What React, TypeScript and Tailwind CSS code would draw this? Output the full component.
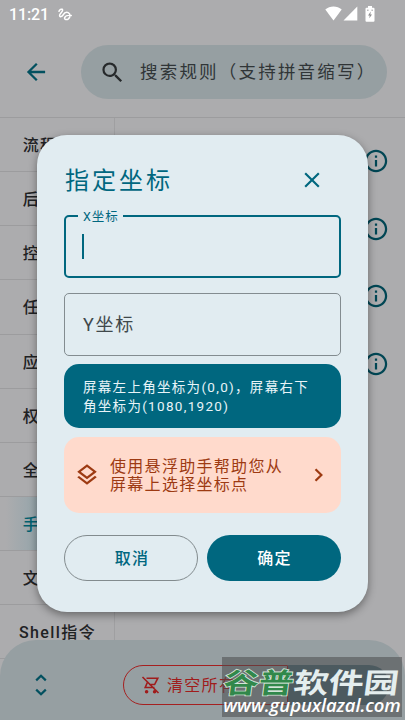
import { MdArrowBack, MdClose, MdInfoOutline, MdOutlineLayers, MdSearch } from "react-icons/md";

const categories = [
  "流程控制",
  "后台任务",
  "控件操作",
  "任务管理",
  "应用操作",
  "权限检查",
  "全局操作",
  "手势操作",
  "文件操作",
  "Shell指令",
];

function StatusBar() {
  return (
    <div className="flex h-[29px] items-center pl-[9px] pr-[30px] text-white">
      <span className="text-[16px] font-medium leading-none tracking-[-0.1px]">11:21</span>
      <svg className="ml-[9px]" width="14" height="14" viewBox="0 0 14 14" fill="none" stroke="currentColor" strokeWidth="1.5" strokeLinecap="round" strokeLinejoin="round">
        <path d="M1 3.2C1.600 1.400 4.600.2 4.600 2.200 4.600 4 1.400 5.600 1.600 7.600 2 9.800 4 8.400 5 7 6.200 5 8.200 3.800 10.200 4.600 12.600 5.800 12.600 9 10.400 10.800 8.600 12.200 6.200 11.600 6.600 9.800 7.200 7.800 10.400 7 13.200 7.600" />
      </svg>
      <div className="ml-auto flex items-center pb-0.5">
        <svg width="17" height="15" viewBox="0 0 17 15" fill="currentColor">
          <path d="M8.5 14.5L.3 3.6C2.6 1.6 5.400.6 8.500.6s5.900 1 8.200 3z" />
        </svg>
        <svg className="ml-[1px]" width="15" height="15" viewBox="0 0 15 15" fill="currentColor">
          <path d="M14.300.5v14H.5z" />
        </svg>
        <svg className="ml-[7px]" width="10" height="16" viewBox="0 0 10 16">
          <path d="M3 0h4v1.700h1.500Q9.500 1.700 9.500 2.700v12Q9.500 15.700 8.500 15.700h-7Q.5 15.700.5 14.700v-12Q.5 1.700 1.500 1.700H3z" fill="currentColor" />
          <path d="M5.800 5.600L3 9.400h1.700L4.300 12.200 7 8.400H5.300z" fill="#8c8c8e" />
          <path d="M2 4.200h1.600M6.400 4.200H8" stroke="#a0a0a2" strokeWidth="1" />
        </svg>
      </div>
    </div>
  );
}

function Header() {
  return (
    <header className="flex h-[118px] shrink-0 flex-col border-b border-[#9c9c9e]">
      <StatusBar />
      <div className="mt-4 flex items-center">
        <MdArrowBack className="ml-6 size-6 scale-[1.14] text-[#02505f]" />
        <div className="ml-[33px] flex h-[54px] w-[306px] items-center rounded-full bg-[#969fa2] pl-[18px] text-[#26292b]">
          <MdSearch className="size-[27px]" />
          <span className="ml-[14px] whitespace-nowrap text-[17.5px] tracking-[2.2px] text-[#303537]">搜索规则（支持拼音缩写）</span>
        </div>
      </div>
    </header>
  );
}

function Sidebar() {
  return (
    <nav className="w-[115px] shrink-0 border-r border-[#9f9fa1]">
      {categories.map((name) => (
        <div
          key={name}
          className={
            name === "手势操作"
              ? "flex h-[54.15px] items-center justify-center border-b border-[#9c9c9e] bg-linear-to-r from-[#acacae] from-5% to-[#8fa3aa] to-40% pl-px pt-[3px] text-[16px] font-medium tracking-[1.4px] text-[#02606f]"
              : "flex h-[54.15px] items-center justify-center border-b border-[#9c9c9e] pl-px pt-[3px] text-[16px] font-medium tracking-[1.4px] text-[#1f2224]"
          }
        >
          {name}
        </div>
      ))}
    </nav>
  );
}

function Content() {
  return (
    <div className="flex flex-1 flex-col items-end gap-[43.7px] pr-[17px] pt-[31px]">
      {[0, 1, 2, 3].map((i) => (
        <MdInfoOutline key={i} className="size-6 scale-[1.12] text-[#014654]" />
      ))}
    </div>
  );
}

function BottomBar() {
  return (
    <footer className="absolute inset-x-0 bottom-0 flex h-20 items-center rounded-t-[36px] bg-[#969fa2] pl-[35px] pt-[10px]">
      <svg width="12" height="22" viewBox="0 0 12 22" fill="none" stroke="#02505f" strokeWidth="2.200">
        <path d="M1.200 6.400L6 1.800l4.800 4.600M1.200 15.600L6 20.200l4.800-4.600" />
      </svg>
      <div className="ml-[76px] flex h-10 w-[165px] items-center rounded-l-full border border-[#a52020] pl-[17px] text-[#a01c1c]">
        <svg width="20" height="20" viewBox="0 0 20 20" fill="none" stroke="currentColor" strokeWidth="1.600">
          <path d="M1.500 2l16 16M5.500 3.200h11.300l-3.200 6.300H8M6.800 6.500l-2.600 6h9.300" />
          <circle cx="5.600" cy="16.800" r="1" fill="currentColor" />
          <circle cx="13.600" cy="16.800" r="1" fill="currentColor" />
        </svg>
        <span className="ml-[6px] whitespace-nowrap pt-0.5 text-[16px] tracking-[1.3px]">清空所有</span>
      </div>
      <div className="h-10 w-[101px] rounded-r-full bg-[#4f6d75]" />
    </footer>
  );
}

function Dialog() {
  return (
    <div className="absolute left-[37px] top-[135px] flex h-[477px] w-[331px] flex-col rounded-[30px] bg-[#e1ecf1] px-[27px] pt-[27px] shadow-[0_3px_8px_rgba(0,0,0,0.4)]">
      <div className="flex h-[35px] items-center justify-between">
        <h2 className="pl-px pt-[2px] text-[24px] leading-none tracking-[3px] text-[#00677f]">指定坐标</h2>
        <MdClose className="mr-[16px] size-[26px] text-[#00677f]" />
      </div>

      <div className="relative mt-[18px] h-[63px] shrink-0 rounded-[5px] border-2 border-[#00677f]">
        <span className="absolute -top-[8px] left-[12px] bg-[#e1ecf1] pl-[5px] pr-[4px] text-[12.5px] leading-4 tracking-[0.9px] text-[#00677f]">X坐标</span>
        <div className="ml-[16px] mt-[17px] h-[25px] w-[2px] bg-[#00677f]" />
      </div>

      <div className="mt-[15px] flex h-[63px] shrink-0 items-center rounded-[5px] border border-[#838c90] pl-[18px] text-[18px] tracking-[1.700px] text-[#40484b]">
        Y坐标
      </div>

      <div className="mt-[8px] flex h-[64px] shrink-0 items-center whitespace-nowrap rounded-[15px] bg-[#00677f] pl-[19px] pt-px text-[13.500px] leading-[18.500px] tracking-[1.300px] text-[#e8f4f8]">
        <p>
          屏幕左上角坐标为(0,0)，屏幕右下
          <br />
          角坐标为(1080,1920)
        </p>
      </div>

      <div className="mt-[9px] flex h-[76px] shrink-0 items-center rounded-[15px] bg-[#ffdacc] pl-[10px] text-[#9d3a12]">
        <MdOutlineLayers className="size-[26px]" />
        <p className="ml-[10px] whitespace-nowrap pt-[2px] text-[16px] leading-[18.500px] tracking-[1.300px]">
          使用悬浮助手帮助您从
          <br />
          屏幕上选择坐标点
        </p>
        <svg className="ml-auto mr-[17px]" width="10" height="14" viewBox="0 0 10 14" fill="none" stroke="currentColor" strokeWidth="2.200">
          <path d="M1.500 1.200L7.400 7l-5.900 5.800" />
        </svg>
      </div>

      <div className="mt-[22px] flex gap-[9px] text-[16px] font-medium tracking-[1.200px]">
        <button className="h-[46px] w-[134px] rounded-full border border-[#828b8e] pl-[2px] pt-[2px] text-[#00677f]">取消</button>
        <button className="h-[46px] w-[134px] rounded-full bg-[#00677f] pl-px pt-[2px] text-white">确定</button>
      </div>
    </div>
  );
}

function Watermark() {
  return (
    <div className="absolute bottom-[3px] right-[3px] flex h-[60px] w-[180px] flex-col items-center whitespace-nowrap bg-[#4b4b4d]/55">
      <div className="mt-[9px] -skew-x-6 scale-y-[0.8] font-['Noto_Sans_CJK_SC',sans-serif] text-[35px] font-bold leading-[30px] text-[#e4eeee]">
        <span className="text-[#31884b] [paint-order:stroke_fill] [-webkit-text-stroke:2px_#d3e5d8]">谷普</span>
        软件园
      </div>
      <div className="mt-[-1px] font-['Open_Sans',sans-serif] text-[18.500px] font-semibold italic leading-[20px] tracking-[-0.1px] text-white">www.gupuxlazal.com</div>
    </div>
  );
}

export default function App() {
  return (
    <div className="relative flex h-[720px] w-[405px] flex-col overflow-hidden bg-[#acacae] font-['Roboto','Noto_Sans_CJK_SC',sans-serif]">
      <Header />
      <main className="flex min-h-0 flex-1">
        <Sidebar />
        <Content />
      </main>
      <BottomBar />
      <Dialog />
      <Watermark />
    </div>
  );
}
